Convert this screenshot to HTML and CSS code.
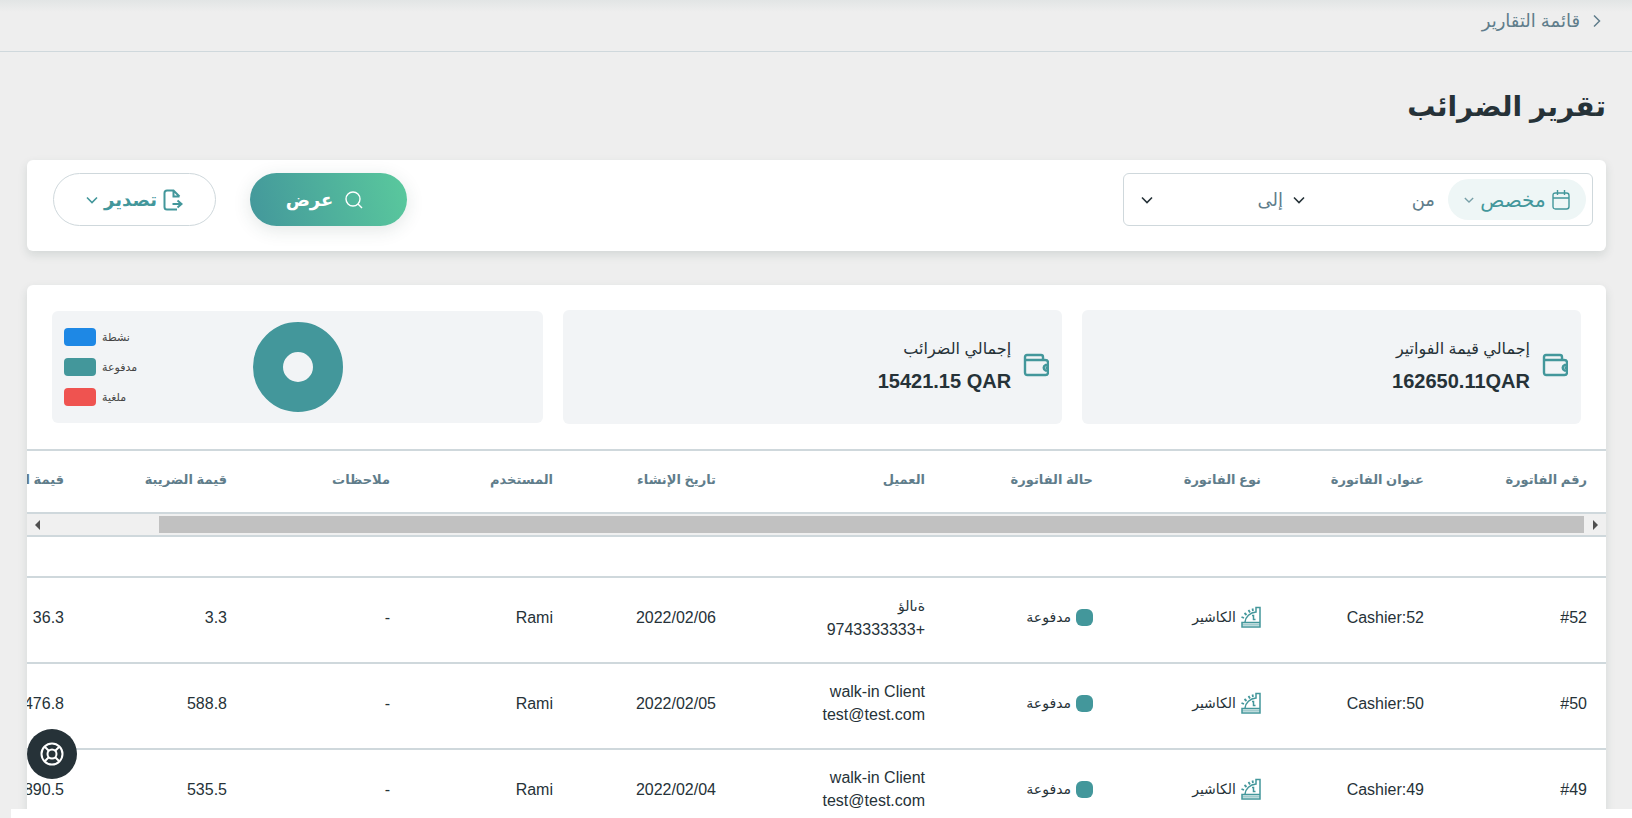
FILE: index.html
```html
<!DOCTYPE html>
<html lang="ar" dir="rtl">
<head>
<meta charset="utf-8">
<title>تقرير الضرائب</title>
<link rel="stylesheet" href="styles.css">
</head>
<body>
<svg class="sprite" aria-hidden="true">
  <symbol id="wallet" viewBox="0 0 26 24">
    <path d="M2 7V4Q2 2 4 2H18Q20 2 20 4V7M2 7H22Q25 7 25 9.500V19.500Q25 22 22.500 22H4.500Q2 22 2 19.500V7M25 12H22.500A3 3 0 0 0 22.500 17.500H25M22.500 14.700H24" fill="none" stroke="currentColor" stroke-width="2.400"/>
  </symbol>
  <symbol id="chevron" viewBox="0 0 12 8">
    <path d="M1 1.500 6 6.500 11 1.500" fill="none" stroke="currentColor" stroke-width="1.600"/>
  </symbol>
  <symbol id="cashier" viewBox="0 0 20 22">
    <path d="M1 16.500H19V21H1ZM4 16C4.500 11 9 6.500 15 6V1.500H19V16.500" fill="none" stroke="currentColor" stroke-width="1.500"/>
    <path d="M.500 11 3 12M3.500 7 5.500 9M7.500 4 9 6.500M11.500 2.500 12 5" fill="none" stroke="currentColor" stroke-width="1.800"/>
    <path d="M1 18.700H19" stroke="currentColor" stroke-opacity=".5" stroke-width="2"/>
    <path d="M11 9.500H12.500V13.500H14.500" fill="none" stroke="currentColor" stroke-width="1.500"/>
  </symbol>
</svg>
<div class="page">
  <nav class="topbar">
    <a class="crumb" href="#">
      <svg class="crumb-arrow" viewBox="0 0 8 14"><path d="M1 1.500 6.500 7 1 12.500" fill="none" stroke="currentColor" stroke-width="1.500"/></svg>
      قائمة التقارير
    </a>
  </nav>
  <main class="main">
    <h1 class="title">تقرير الضرائب</h1>

    <section class="card filters">
      <div class="range">
        <button class="preset" type="button">
          <svg class="icon-cal" viewBox="0 0 18 20"><path d="M3.500 3H14.500Q17 3 17 5.500V16.500Q17 19 14.500 19H3.500Q1 19 1 16.500V5.500Q1 3 3.500 3ZM1 8H17M5.500 0V5M12.500 0V5" fill="none" stroke="currentColor" stroke-width="1.400"/></svg>
          مخصص
          <svg class="chev chev-soft"><use href="#chevron"/></svg>
        </button>
        <button class="date" type="button"><span>من</span><svg class="chev"><use href="#chevron"/></svg></button>
        <button class="date" type="button"><span>إلى</span><svg class="chev"><use href="#chevron"/></svg></button>
      </div>
      <div class="actions">
        <button class="btn btn-show" type="button">
          <svg class="icon-search" viewBox="0 0 18 18"><circle cx="8" cy="8" r="7" fill="none" stroke="currentColor" stroke-width="1.400"/><path d="M13 13 17 17" stroke="currentColor" stroke-width="1.400"/></svg>
          عرض
        </button>
        <button class="btn btn-export" type="button">
          <svg class="icon-export" viewBox="0 0 20 22"><path d="M14 20.500H4Q1.500 20.500 1.500 18V4Q1.500 1.500 4 1.500H10.500L16.500 7.500M10.500 1.500V7.500H16.500" fill="none" stroke="currentColor" stroke-width="2"/><path d="M9.500 15H18M14.500 11.500 18.500 15 14.500 18.500" fill="none" stroke="currentColor" stroke-width="2"/></svg>
          تصدير
          <svg class="chev"><use href="#chevron"/></svg>
        </button>
      </div>
    </section>

    <section class="card report">
      <div class="stats">
        <div class="stat">
          <svg class="icon-wallet"><use href="#wallet"/></svg>
          <div><p class="stat-name">إجمالي قيمة الفواتير</p><p class="stat-value"><bdi dir="ltr">162650.11QAR</bdi></p></div>
        </div>
        <div class="stat">
          <svg class="icon-wallet"><use href="#wallet"/></svg>
          <div><p class="stat-name">إجمالي الضرائب</p><p class="stat-value"><bdi dir="ltr">15421.15 QAR</bdi></p></div>
        </div>
        <div class="stat chart">
          <svg class="donut" viewBox="0 0 90 90"><circle cx="45" cy="45" r="30" fill="none" stroke="#43979b" stroke-width="30"/></svg>
          <ul class="legend">
            <li><span class="swatch blue"></span>نشطة</li>
            <li><span class="swatch teal"></span>مدفوعة</li>
            <li><span class="swatch red"></span>ملغية</li>
          </ul>
        </div>
      </div>

      <div class="clip">
        <table class="grid">
          <colgroup><col class="c-s"><col class="c-s"><col class="c-m"><col class="c-m"><col class="c-l"><col class="c-s"><col class="c-s"><col class="c-s"><col class="c-s"><col class="c-end"></colgroup>
          <thead>
            <tr><th>رقم الفاتورة</th><th>عنوان الفاتورة</th><th>نوع الفاتورة</th><th>حالة الفاتورة</th><th>العميل</th><th>تاريخ الإنشاء</th><th>المستخدم</th><th>ملاحظات</th><th>قيمة الضريبة</th><th>قيمة الفاتورة</th></tr>
          </thead>
        </table>
      </div>
      <div class="scroll">
        <svg class="scroll-arrow" viewBox="0 0 5 10"><path d="M0 0 5 5 0 10Z" fill="#505050"/></svg>
        <div class="thumb"></div>
        <svg class="scroll-arrow" viewBox="0 0 5 10"><path d="M5 0 0 5 5 10Z" fill="#505050"/></svg>
      </div>
      <div class="clip">
        <table class="grid">
          <colgroup><col class="c-s"><col class="c-s"><col class="c-m"><col class="c-m"><col class="c-l"><col class="c-s"><col class="c-s"><col class="c-s"><col class="c-s"><col class="c-end"></colgroup>
          <tbody>
            <tr class="blank"><td colspan="10"></td></tr>
            <tr>
              <td>#52</td><td>Cashier:52</td>
              <td><span class="tag"><svg class="icon-cash"><use href="#cashier"/></svg>الكاشير</span></td>
              <td><span class="tag"><span class="dot"></span>مدفوعة</span></td>
              <td><span class="client">ةىالؤ</span><br>+9743333333</td><td>2022/02/06</td><td>Rami</td><td>-</td><td>3.3</td><td>36.3</td>
            </tr>
            <tr>
              <td>#50</td><td>Cashier:50</td>
              <td><span class="tag"><svg class="icon-cash"><use href="#cashier"/></svg>الكاشير</span></td>
              <td><span class="tag"><span class="dot"></span>مدفوعة</span></td>
              <td>walk-in Client<br>test@test.com</td><td>2022/02/05</td><td>Rami</td><td>-</td><td>588.8</td><td>6476.8</td>
            </tr>
            <tr>
              <td>#49</td><td>Cashier:49</td>
              <td><span class="tag"><svg class="icon-cash"><use href="#cashier"/></svg>الكاشير</span></td>
              <td><span class="tag"><span class="dot"></span>مدفوعة</span></td>
              <td>walk-in Client<br>test@test.com</td><td>2022/02/04</td><td>Rami</td><td>-</td><td>535.5</td><td>5890.5</td>
            </tr>
          </tbody>
        </table>
      </div>
    </section>
  </main>
  <div class="base"></div>
</div>
<button class="help" type="button" aria-label="مساعدة">
  <svg class="icon-help" viewBox="0 0 24 24" fill="none" stroke="currentColor" stroke-width="2"><circle cx="12" cy="12" r="10.500"/><circle cx="12" cy="12" r="4.500"/><path d="M4.500 4.500 9 9M19.500 4.500 15 9M4.500 19.500 9 15M19.500 19.500 15 15"/></svg>
</button>
</body>
</html>
```

FILE: styles.css
```css
* { box-sizing: border-box; }
body {
  margin: 0;
  background: #eee;
  color: #263238;
  font-family: "Liberation Sans", "DejaVu Sans", sans-serif;
  font-size: 16px;
}
button { font: inherit; color: inherit; background: none; border: 0; padding: 0; cursor: pointer; }
p, ul, h1 { margin: 0; padding: 0; }
.sprite { display: none; }
.page { display: flex; flex-direction: column; height: 100vh; overflow: hidden; }
.topbar {
  flex: none;
  display: flex;
  height: 52px;
  padding: 0 31px 10px;
  border-bottom: 1px solid #cfd8dc;
  background: linear-gradient(#e2e5e5, #eee 12px);
}
.crumb { display: flex; align-items: center; gap: 13px; color: #607d8b; font-size: 18px; text-decoration: none; }
.crumb-arrow { width: 8px; height: 14px; }
.main { flex: 1; min-height: 0; overflow: hidden; padding: 0 26px 0 27px; }
.title { padding: 30px 0 28px; font-size: 28px; line-height: 50px; font-weight: 700; }
.card { background: #fff; border-radius: 6px; box-shadow: 0 4px 10px rgba(38, 70, 60, .13); }
.filters { display: flex; justify-content: space-between; padding: 13px 13px 25px 26px; }
.range {
  display: flex;
  align-items: center;
  width: 470px;
  height: 53px;
  padding: 0 6px;
  border: 1px solid #cfd8dc;
  border-radius: 6px;
}
.preset {
  display: flex;
  align-items: center;
  justify-content: center;
  gap: 6px;
  width: 138px;
  height: 41px;
  border-radius: 21px;
  background: #eef6f6;
  color: #43979b;
  font-size: 20px;
}
.icon-cal { width: 18px; height: 20px; }
.chev { width: 12px; height: 8px; color: #263238; }
.chev-soft { width: 10px; color: #78a0a8; }
.date { display: flex; flex: 1; align-items: center; justify-content: space-between; padding: 0 13px 0 0; color: #607d8b; font-size: 18px; }
.date:last-child { padding: 0 10px 0 11px; }
.actions { display: flex; gap: 34px; }
.btn { display: flex; align-items: center; justify-content: center; height: 53px; border-radius: 27px; font-size: 18px; font-weight: 700; }
.btn-show {
  gap: 12px;
  width: 157px;
  padding-right: 8px;
  background: linear-gradient(75deg, #43979b, #5ac99d);
  box-shadow: 0 4px 18px rgba(38, 70, 60, .13);
  color: #fff;
}
.btn-export { gap: 6px; width: 163px; border: 1px solid #cfd8dc; color: #43979b; }
.btn-export .chev { color: #43979b; }
.icon-search { width: 18px; height: 18px; }
.icon-export { width: 20px; height: 22px; }
.report { margin-top: 34px; }
.stats { display: flex; align-items: center; gap: 20px; padding: 25px; }
.stat { display: flex; flex: 498; align-items: center; gap: 12px; height: 114px; padding: 0 13px 4px; border-radius: 6px; background: #f2f4f6; }
.icon-wallet { width: 26px; height: 24px; color: #43979b; }
.stat-name { font-size: 16px; line-height: 32px; }
.stat-value { font-size: 20px; line-height: 32px; font-weight: 700; }
.chart { flex: 492; height: 112px; justify-content: flex-end; padding: 0 12px; gap: 85px; }
.donut { width: 90px; height: 90px; }
.legend { display: flex; flex: none; flex-direction: column; gap: 12px; width: 104px; list-style: none; direction: ltr; font-size: 11px; line-height: 18px; color: #444; }
.legend li { display: flex; gap: 6px; }
.swatch { width: 32px; height: 18px; border-radius: 4px; }
.blue { background: #1e88e5; }
.teal { background: #43979b; }
.red { background: #ef5350; }
.clip { overflow: hidden; }
.grid { width: 108%; table-layout: fixed; border-collapse: collapse; }
.c-s { width: 163px; }
.c-m { width: 168px; }
.c-l { width: 209px; }
.c-end { width: 185px; }
.grid th { height: 63px; padding: 0 19px 4px 0; border: solid #cfd8dc; border-width: 2px 0; text-align: start; color: #607d8b; font-size: 13px; white-space: nowrap; }
.grid td { height: 86px; padding: 0 19px 6px 0; border-bottom: 2px solid #cfd8dc; line-height: 23px; }
.grid .blank td { height: 40px; }
.tag { display: flex; align-items: center; gap: 5px; font-size: 14px; }
.client { font-size: 14px; }
.icon-cash { width: 20px; height: 22px; color: #43979b; }
.dot { width: 17px; height: 17px; border-radius: 6px; background: #43979b; }
.scroll { display: flex; align-items: center; height: 23px; padding: 0 8px; border-bottom: 2px solid #cfd8dc; background: #f0f0f0; }
.scroll-arrow { flex: none; width: 5px; height: 10px; }
.thumb { width: 91.2%; height: 17px; margin-inline: 9px auto; background: #c1c1c1; }
.base { flex: none; height: 9px; margin-left: 11px; background: #fff; }
.help {
  position: fixed;
  left: 27px;
  bottom: 39px;
  display: flex;
  align-items: center;
  justify-content: center;
  width: 50px;
  height: 50px;
  border-radius: 50%;
  background: #263238;
  color: #fff;
}
.icon-help { width: 24px; height: 24px; }
```
